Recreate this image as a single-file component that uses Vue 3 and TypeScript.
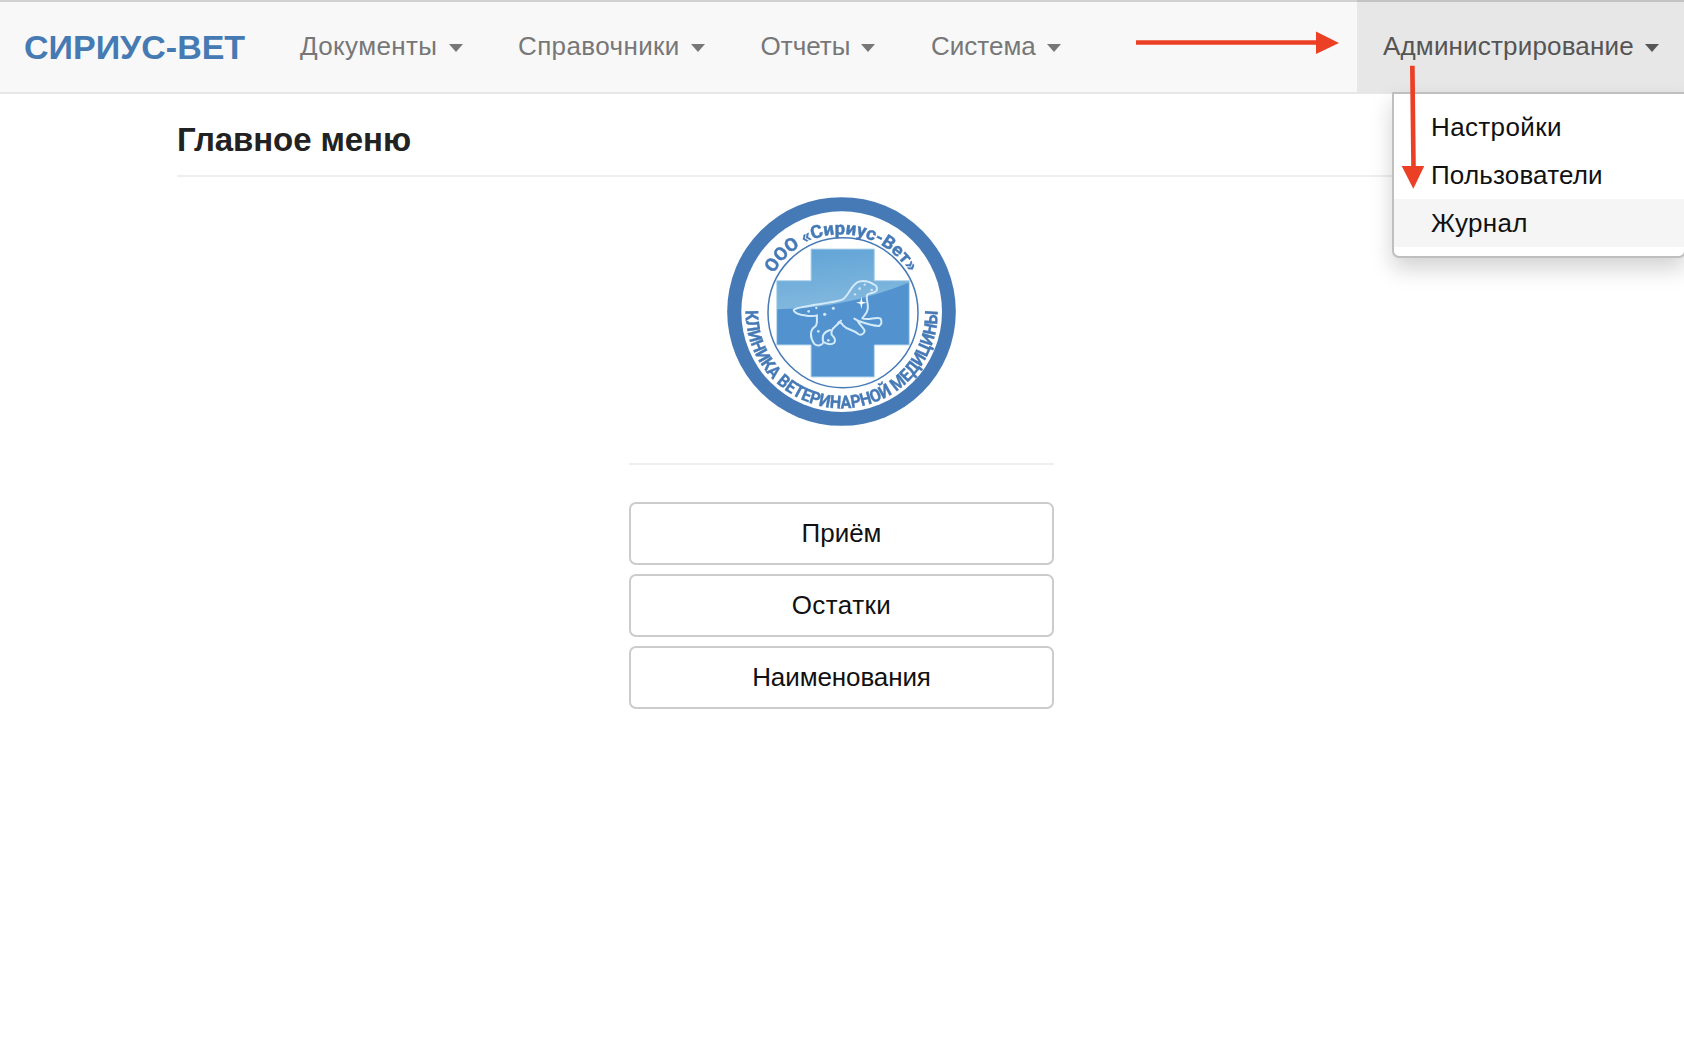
<script setup lang="ts">
interface Item { label: string; cls: string }

const menus: Item[] = [
  { label: 'Документы', cls: 'documents' },
  { label: 'Справочники', cls: 'directories' },
  { label: 'Отчеты', cls: 'reports' },
  { label: 'Система', cls: 'system' },
]
const adminItems: Item[] = [
  { label: 'Настройки', cls: 'settings' },
  { label: 'Пользователи', cls: 'users' },
  { label: 'Журнал', cls: 'journal' },
]
const actions: Item[] = [
  { label: 'Приём', cls: 'visit' },
  { label: 'Остатки', cls: 'stock' },
  { label: 'Наименования', cls: 'names' },
]
</script>

<template>
  <div class="page">
    <nav class="navbar">
      <a class="brand">СИРИУС-ВЕТ</a>
      <a v-for="m in menus" :key="m.label" class="menu" :class="m.cls">
        <span>{{ m.label }}</span><i class="caret"></i>
      </a>
      <div class="menu admin">
        <span>Администрирование</span><i class="caret"></i>
        <ul class="dropdown">
          <li v-for="i in adminItems" :key="i.label" :class="i.cls">{{ i.label }}</li>
        </ul>
      </div>
    </nav>

    <main class="container">
      <h1>Главное меню</h1>
      <section class="panel">
        <svg class="logo" viewBox="36 37 687 687">
          <defs>
            <linearGradient id="gloss" x1="0" y1="0" x2="0.25" y2="1">
              <stop offset="0" stop-color="#5fa3d6" />
              <stop offset="1" stop-color="#82b8de" />
            </linearGradient>
            <clipPath id="cross"><path d="M288 193H478V288H583V481H478V577H288V481H185V288H288Z" /></clipPath>
            <path id="arcTop" d="M144 385A236 236 0 0 1 616 385" />
            <path id="arcBottom" d="M92 376V383A288 288 0 0 0 668 383V376" />
          </defs>
          <circle cx="379.5" cy="380.5" r="343" fill="#467ab6" />
          <circle cx="380" cy="381" r="301" fill="#fff" />
          <circle cx="384" cy="384" r="225" fill="none" stroke="#467ab6" stroke-width="4.5" />
          <g clip-path="url(#cross)">
            <rect x="180" y="190" width="410" height="390" fill="#5293cf" />
            <path d="M180 190H590V291Q480 335 390 352Q300 372 180 374Z" fill="url(#gloss)" />
          </g>
          <path d="M288 193H478V288H583V481H478V577H288V481H185V288H288Z" fill="none" stroke="#b9d8ef" stroke-width="3" />
          <path class="dog" d="M236 376C250 366 268 368 292 362C330 356 362 352 382 345C402 333 408 300 431 291C450 286 466 292 476 299C486 302 488 312 484 319C474 328 460 324 456 331C452 344 462 358 458 374C456 386 448 392 442 401C460 408 480 396 496 401C502 410 500 420 492 424C470 424 450 416 428 408C432 420 446 428 449 438C448 448 438 453 430 448C414 434 396 436 384 422C378 412 374 410 367 419C356 430 346 436 350 450C358 458 364 466 358 474C348 482 334 478 326 472C322 482 308 486 298 478C284 458 284 436 300 426C310 418 304 404 306 392C290 398 272 392 258 390C248 388 238 386 236 376Z" />
          <path class="dog" d="M346 436C330 440 320 450 324 470M428 408L418 402M367 419L378 408" />
          <path d="M439 336L442 351L455 354L442 357L439 373L436 357L423 354L436 351Z" fill="#fff" />
          <g fill="#cfe6f8">
            <circle cx="434" cy="312" r="4" /><circle cx="449" cy="300" r="3.5" /><circle cx="470" cy="316" r="4" />
            <circle cx="420" cy="329" r="3.5" /><circle cx="355" cy="371" r="4.5" /><circle cx="329" cy="389" r="5" />
            <circle cx="304" cy="370" r="3.5" /><circle cx="281" cy="380" r="4" /><circle cx="310" cy="440" r="4" />
            <circle cx="373" cy="413" r="5" /><circle cx="340" cy="467" r="4" />
          </g>
          <text class="ring top" textLength="490" lengthAdjust="spacingAndGlyphs"><textPath href="#arcTop" startOffset="124" textLength="490" lengthAdjust="spacingAndGlyphs">ООО «Сириус-Вет»</textPath></text>
          <text class="ring bottom" textLength="914" lengthAdjust="spacingAndGlyphs"><textPath href="#arcBottom" startOffset="2" textLength="914" lengthAdjust="spacingAndGlyphs">КЛИНИКА ВЕТЕРИНАРНОЙ МЕДИЦИНЫ</textPath></text>
        </svg>
        <hr />
        <button v-for="a in actions" :key="a.label" type="button" :class="a.cls">{{ a.label }}</button>
      </section>
    </main>

    <svg class="arrow-right" width="204" height="24" viewBox="0 0 204 24">
      <path d="M0 9.2H180V.5L203 12L180 23V13.8H0Z" fill="#eb4025" />
    </svg>
    <svg class="arrow-down" width="26" height="126" viewBox="0 0 26 126">
      <path d="M10 .7H14.7L15.8 101H24.3L13.3 123.7L1.7 101H11.2Z" fill="#eb4025" />
    </svg>
  </div>
</template>

<style scoped>
.page { position: relative; width: 1684px; height: 1052px; overflow: hidden; background: #fff; font-family: "Liberation Sans", Arial, sans-serif; font-size: 26px; color: #111; }
.navbar { display: flex; box-sizing: border-box; height: 94px; border-top: 2px solid #d1d1d1; border-bottom: 2px solid #e7e7e7; background: #f8f8f8; line-height: 88px; }
.brand { width: 274px; padding: 1px 0 0 24px; box-sizing: border-box; font-size: 34px; font-weight: 700; color: #467ab3; white-space: nowrap; }
.menu { position: relative; display: flex; align-items: center; justify-content: space-between; box-sizing: border-box; height: 88px; padding: 0 27px 0 26px; color: #777; white-space: nowrap; }
.documents { width: 216px; letter-spacing: .36px; }
.directories { width: 242px; padding-left: 28px; letter-spacing: .38px; }
.reports { width: 170px; padding-left: 28.5px; }
.system { width: 186px; padding-left: 29px; }
.caret { border: 7px solid transparent; border-top: 8px solid currentColor; border-bottom: 0; margin-top: 3px; }
.admin { width: 327px; height: 92px; padding-bottom: 4px; margin-left: auto; padding-right: 25px; box-sizing: border-box; background: #e7e7e7; color: #555; letter-spacing: .17px; box-shadow: 0 -2px #c3c3c3; }
.dropdown { position: absolute; top: 90px; left: 35px; width: 294px; margin: 0; padding: 9px 0; box-sizing: border-box; list-style: none; background: #fff; border: 2px solid #bfbfbf; border-radius: 0 0 7px 7px; box-shadow: 0 11px 22px rgba(0,0,0,.175); color: #111; }
.dropdown li { height: 48px; line-height: 49px; padding-left: 37px; }
.settings { letter-spacing: .37px; }
.users { letter-spacing: .17px; }
.journal { background: #f5f5f5; letter-spacing: .3px; }
.container { width: 1330px; margin: 0 auto; }
h1 { height: 83px; margin: 0; box-sizing: border-box; border-bottom: 2px solid #eee; font-size: 33px; line-height: 92px; font-weight: 700; letter-spacing: -.1px; color: #222; }
.panel { display: flex; flex-direction: column; width: 425px; margin: 20px 0 0 452px; }
.logo { width: 229px; height: 229px; margin-left: 98px; filter: blur(.4px); }
hr { width: 100%; height: 2px; margin: 37px 0; border: 0; background: #eee; }
button { height: 63px; margin: 0 0 9px; padding: 0; border: 2px solid #ccc; border-radius: 7px; background: #fff; font: inherit; color: #111; }
.stock { letter-spacing: .45px; }
.names { letter-spacing: -.1px; }
.dog { fill: none; stroke: #d3eafa; stroke-width: 6; stroke-linejoin: round; stroke-linecap: round; }
.ring { font-family: Roboto, sans-serif; font-weight: 700; fill: #467ab6; stroke: #467ab6; stroke-width: 1.2; }
.top { font-size: 54px; }
.bottom { font-size: 53px; }
.arrow-right { position: absolute; left: 1136px; top: 31px; }
.arrow-down { position: absolute; left: 1400px; top: 65px; }
</style>
